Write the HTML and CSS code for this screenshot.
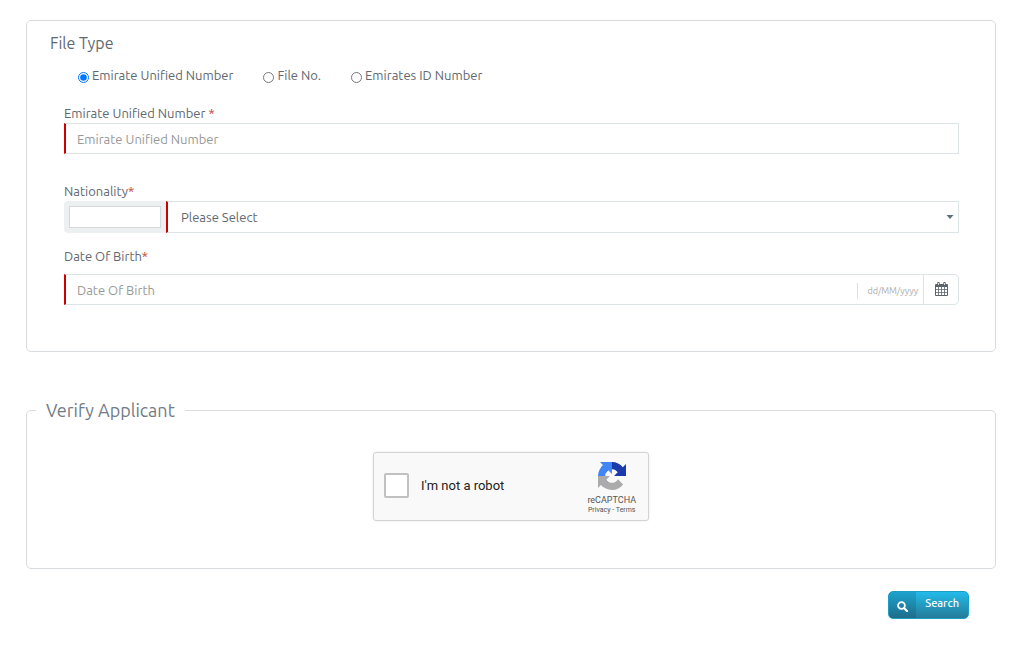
FILE: index.html
```html
<!DOCTYPE html>
<html lang="en">
<head>
<meta charset="utf-8">
<meta name="viewport" content="width=device-width, initial-scale=1">
<title>File Validity</title>
<link rel="stylesheet" href="styles.css">
</head>
<body>
<form class="page">
  <fieldset class="panel panel-file">
    <h2 class="panel-heading">File Type</h2>
    <div class="choices">
      <label class="choice"><input type="radio" name="type" checked><span>Emirate Unified Number</span></label>
      <label class="choice"><input type="radio" name="type"><span>File No.</span></label>
      <label class="choice"><input type="radio" name="type"><span>Emirates ID Number</span></label>
    </div>

    <div class="field field-number">
      <label class="label" for="number">Emirate Unified Number <span class="required">*</span></label>
      <input class="control" id="number" type="text" placeholder="Emirate Unified Number">
    </div>

    <div class="field field-nation">
      <label class="label" for="nation">Nationality<span class="required">*</span></label>
      <div class="group">
        <div class="addon"><input class="code" type="text" aria-label="Nationality code"></div>
        <div class="select-wrap">
          <select class="control select" id="nation"><option>Please Select</option></select>
          <svg class="caret" viewBox="0 0 8 4" aria-hidden="true"><path d="M0.5 0h7L4 4z" fill="#5f6f7a"/></svg>
        </div>
      </div>
    </div>

    <div class="field field-birth">
      <label class="label" for="birth">Date Of Birth<span class="required">*</span></label>
      <div class="group">
        <div class="date-wrap">
          <input class="control" id="birth" type="text" placeholder="Date Of Birth">
          <span class="format">dd/MM/yyyy</span>
        </div>
        <button class="calendar" type="button" aria-label="Open calendar">
          <svg viewBox="0 0 13 14" width="13" height="14" aria-hidden="true">
            <path d="M1 2h11a1 1 0 0 1 1 1v10a1 1 0 0 1-1 1H1a1 1 0 0 1-1-1V3a1 1 0 0 1 1-1z" fill="#5a626a"/>
            <path d="M1 5h2.2v2.2H1zM4 5h2.2v2.2H4zM7 5h2.2v2.2H7zM10 5h2v2.2h-2zM1 8h2.2v2.2H1zM4 8h2.2v2.2H4zM7 8h2.2v2.2H7zM10 8h2v2.2h-2zM1 11h2.2v2H1zM4 11h2.2v2H4zM7 11h2.2v2H7zM10 11h2v2h-2z" fill="#fff"/>
            <path d="M3.5 1v2M9.5 1v2" stroke="#5a626a" stroke-width="2.4" stroke-linecap="round"/>
            <path d="M3.5 1v2M9.5 1v2" stroke="#fff" stroke-width="0.8"/>
          </svg>
        </button>
      </div>
    </div>
  </fieldset>

  <fieldset class="panel panel-verify">
    <legend class="legend">Verify Applicant</legend>
    <div class="captcha">
      <label class="robot"><input class="robot-box" type="checkbox"><span>I'm not a robot</span></label>
      <div class="brand">
        <svg class="brand-logo" viewBox="0 0 64 64" aria-hidden="true">
          <path d="M64 31.955c-.001-.46-.012-.918-.033-1.374V4.687l-7.16 7.16C50.948 4.674 42.033.093 32.05.093c-10.389 0-19.622 4.96-25.458 12.64l11.736 11.86a15.55 15.55 0 0 1 4.754-5.334c2.05-1.6 4.952-2.906 8.968-2.906.485 0 .86.057 1.135.163 4.976.393 9.288 3.139 11.828 7.124l-8.307 8.307 27.294-.043" fill="#1c3aa9"/>
          <path d="M31.862.094c-.46.001-.918.012-1.374.033H4.594l7.16 7.16C4.58 13.16 0 22.076 0 32.056c0 10.388 4.96 19.622 12.64 25.458L24.5 45.779a15.55 15.55 0 0 1-5.334-4.755c-1.6-2.05-2.906-4.95-2.906-8.967 0-.486.057-.86.163-1.136.393-4.975 3.139-9.287 7.124-11.827l8.307 8.307L31.863.094" fill="#4285f4"/>
          <path d="M.001 32.045c.001.46.012.918.033 1.374v25.894l7.16-7.16c5.859 7.173 14.774 11.754 24.757 11.754 10.389 0 19.622-4.96 25.458-12.64L45.673 39.407a15.55 15.55 0 0 1-4.754 5.334c-2.05 1.6-4.952 2.906-8.968 2.906-.485 0-.86-.057-1.135-.163-4.976-.393-9.288-3.139-11.828-7.124l8.307-8.307L.001 32.045" fill="#ababab"/>
        </svg>
        <span class="brand-name">reCAPTCHA</span>
        <span class="brand-links"><a href="#">Privacy</a> - <a href="#">Terms</a></span>
      </div>
    </div>
  </fieldset>

  <div class="actions">
    <button class="search" type="submit">
      <span class="search-icon"><svg viewBox="0 0 11 11" width="11" height="11" aria-hidden="true"><circle cx="4.5" cy="4.5" r="3.4" fill="none" stroke="#fff" stroke-width="1.8"/><path d="M7 7l3 3" stroke="#fff" stroke-width="2.2" stroke-linecap="round"/></svg></span>
      <span class="search-text">Search</span>
    </button>
  </div>
</form>
</body>
</html>
```
FILE: styles.css
```css
* { box-sizing: border-box; }

body {
  margin: 0;
  background: #fff;
  color: #5f6871;
  font: 13px/20px Ubuntu, "Noto Sans", sans-serif;
}

input, select, button { font: inherit; color: inherit; }

.page { padding: 20px 28px 24px 26px; }

.panel {
  margin: 0;
  min-width: 0;
  border: 1px solid #d8dbdd;
  border-radius: 5px;
}

.panel-file { padding: 10px 36px 46px 37px; }

.panel-heading {
  margin: 0 0 0 -14px;
  font-size: 16px;
  line-height: 24px;
  font-weight: 400;
}

.choices {
  display: flex;
  gap: 30px;
  margin: 10px 0 18px 14px;
}

.choice {
  display: flex;
  align-items: center;
  gap: 3px;
}

.choice input {
  width: 11px;
  height: 11px;
  margin: 5px 0 0;
  accent-color: #0075ff;
}

.label { display: block; }

.required { color: #c0392b; }

.control {
  display: block;
  width: 100%;
  height: 31px;
  padding: 0 11px;
  border: 1px solid #dce4e6;
  border-left: 2px solid #c00;
  border-radius: 0;
  background: #fff;
  outline: 0;
}

.control::placeholder { color: #999; opacity: 1; }

.field-number { margin-bottom: 27px; }

.field-nation { margin-bottom: 13px; }

.group { display: flex; }

.addon {
  flex: none;
  padding: 5px;
  border-radius: 4px 0 0 4px;
  background: #ecf0f1;
}

.code {
  display: block;
  width: 92px;
  height: 22px;
  border: 1px solid #d5d8da;
  background: #fff;
}

.select-wrap, .date-wrap {
  position: relative;
  flex: 1;
}

.select {
  height: 32px;
  padding: 0 13px;
  appearance: none;
}

.caret {
  position: absolute;
  top: 14px;
  right: 5px;
  width: 8px;
  height: 4px;
  pointer-events: none;
}

.field-birth .group { margin-top: 8px; }

.format {
  position: absolute;
  top: 9px;
  right: 6px;
  padding-left: 9px;
  border-left: 1px solid #dcdfe1;
  color: #aaa;
  font-size: 9px;
  line-height: 16px;
}

.calendar {
  display: flex;
  align-items: center;
  justify-content: center;
  width: 35px;
  height: 31px;
  padding: 0 0 2px;
  border: 1px solid #dce4e6;
  border-left: 0;
  border-radius: 0 5px 5px 0;
  background: #fff;
}

.panel-verify {
  margin-top: 45px;
  padding: 29px 0 47px;
}

.legend {
  margin-left: 9px;
  padding: 0 10px;
  color: #717b84;
  font-size: 18px;
  line-height: 26px;
  font-weight: 400;
}

.captcha {
  display: flex;
  align-items: center;
  justify-content: space-between;
  width: 276px;
  height: 69px;
  margin: 0 auto;
  padding: 0 10px 0 10px;
  border: 1px solid #d3d3d3;
  border-radius: 3px;
  background: #f9f9f9;
  box-shadow: 0 0 3px rgba(0, 0, 0, 0.08);
  font-family: Roboto, sans-serif;
}

.robot {
  display: flex;
  align-items: center;
  gap: 12px;
  padding-bottom: 2px;
  color: #222;
}

.robot-box {
  width: 25px;
  height: 25px;
  margin: 0;
  border: 2px solid #c1c1c1;
  border-radius: 2px;
  background: #fff;
  appearance: none;
}

.brand {
  display: flex;
  flex-direction: column;
  align-items: center;
  padding: 3px 2px 0 0;
  color: #555;
}

.brand-logo {
  width: 28px;
  height: 28px;
  margin-bottom: 4px;
}

.brand-name { font-size: 9px; line-height: 12px; }

.brand-links { font-size: 7px; line-height: 9px; }

.brand-links a { color: inherit; text-decoration: none; }

.actions {
  display: flex;
  justify-content: flex-end;
  padding: 22px 27px 0 0;
}

.search {
  display: flex;
  height: 28px;
  padding: 0;
  overflow: hidden;
  border: 1px solid #1b9dc4;
  border-radius: 5px;
  background: linear-gradient(#22bbea, #257b98);
  color: #fff;
  font-size: 11px;
  font-weight: 500;
}

.search-icon {
  display: flex;
  align-items: center;
  justify-content: center;
  width: 27px;
  height: 26px;
  padding-top: 2px;
  background: rgba(0, 40, 60, 0.16);
}

.search-text { padding: 0 9px; line-height: 22px; }
```
